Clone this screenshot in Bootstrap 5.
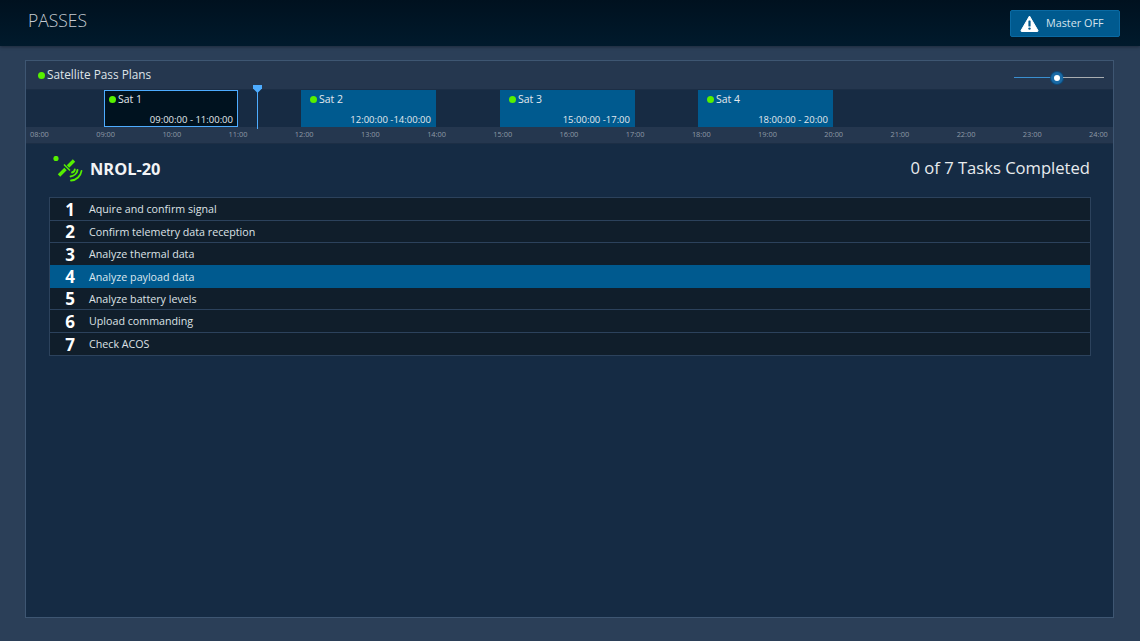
<!doctype html>
<html lang="en">
<head>
<meta charset="utf-8">
<title>Passes</title>
<link href="https://cdn.jsdelivr.net/npm/bootstrap@5.3.0/dist/css/bootstrap.min.css" rel="stylesheet">
<style>
html,body{height:641px;overflow:hidden}
body{background:#2b3f58;color:#fff;font-family:"Open Sans",sans-serif;font-size:11px}
.top{height:46px;background:linear-gradient(#00111f,#001a2c);padding:0 20px 0 28px;box-shadow:0 1px 3px rgba(0,0,0,.35)}
.top h1{font-weight:300;font-size:17.5px;margin:0 0 5px;color:#c6ccd2}
.master{width:110px;height:27px;background:#005a8f;border:1px solid #0a6aa3;border-radius:2px;color:#d5e3ed;font-size:10.8px;padding:0 0 0 9px;gap:7px}
.panel{position:relative;margin:14px 26px 0 25px;height:558px;background:#152b44;border:1px solid #3e5672;box-sizing:border-box}
.phead{height:29px;background:#25374f;padding:0 9px 0 12px;border-bottom:1px solid #1c2e45;font-size:11.8px;color:#dfe4e8}
.dot{display:inline-block;width:7px;height:7px;border-radius:50%;background:#56f000;margin-right:2px;vertical-align:0}
.slide{width:90px;height:10px;margin-top:5px}
.slide i{display:block;height:1.5px;flex:0 0 auto}
.slide .a{width:37px;background:#3a8fd0}
.slide .b{width:41px;background:#a9adb1}
.knob{width:12px;height:12px;border-radius:50%;background:#fff;border:3px solid #1a6aa5;box-shadow:0 0 0 1px #0d4a7a;flex:0 0 auto}
.track{height:37px;background:#172b43;padding-left:78px}
.pass{width:135px;height:37px;background:#005a8f;padding:2px 5px 3px 9px;color:#e3e9ee;font-size:10.5px;line-height:15px}
.pass .time{text-align:right;font-size:9.5px;margin-top:5px}
.pass.sel{width:134px;background:#00121f;border:1px solid #4dacff;padding:1px 4px 2px 4px}
.g1{margin-left:63px}.g2{margin-left:64px}.g3{margin-left:63px}
.marker{position:absolute;left:231px;top:24px;width:1px;height:44px;background:#4dacff}
.marker:before{content:"";position:absolute;left:-4px;top:0;width:9px;height:8px;background:#4dacff;clip-path:polygon(0 0,100% 0,100% 45%,50% 100%,0 45%)}
.ticks{height:17px;background:#25374f;padding:0 5px 0 4px;font-size:7.4px;color:#8e99a6;border-bottom:1px solid #1c2e45;box-sizing:border-box}
.mission{padding:0 23px 4px 27px;height:53px}
.mission h2{font-size:16.4px;font-weight:700;margin:0;color:#f2f4f6}
.mission .prog{font-size:16.6px;color:#e8ebee}
.mission .head{gap:7px}
.tasks{margin:0 22px 0 23px;border:1px solid #2c425c;border-radius:0;background:#101e2b}
.tasks .list-group-item{height:22.6px;padding:1px 0 0;background:#101e2b;color:#dde2e6;font-size:10.7px;border-color:#2c425c;border-width:0 0 1px;display:flex;align-items:center}
.tasks .list-group-item:last-child{border-bottom:0}
.tasks .num{width:40px;text-align:center;font-size:17px;font-weight:700;color:#fff;line-height:1;margin-right:-1px}
.tasks .list-group-item.active{background:#005a8f;color:#dbe6ee;border-color:#005a8f;box-shadow:0 1px 0 #005a8f}
</style>
</head>
<body>
<header class="top d-flex align-items-center justify-content-between">
  <h1>PASSES</h1>
  <button type="button" class="master btn d-flex align-items-center">
    <svg width="19" height="17" viewBox="0 0 19 17" aria-hidden="true"><path d="M9.500 1 18 15.600c.2.4 0 .9-.5.9h-16c-.5 0-.7-.5-.5-.9z" fill="#fff" stroke="#fff" stroke-linejoin="round"/><rect x="8.400" y="5.500" width="2.200" height="6" rx=".6" fill="#005a8f"/><circle cx="9.500" cy="13.600" r="1.200" fill="#005a8f"/></svg>
    <span>Master OFF</span>
  </button>
</header>
<main class="panel">
  <div class="phead d-flex align-items-center justify-content-between">
    <div><span class="dot"></span>Satellite Pass Plans</div>
    <div class="slide d-flex align-items-center"><i class="a"></i><span class="knob"></span><i class="b"></i></div>
  </div>
  <div class="track d-flex">
    <div class="pass sel"><div class="name"><span class="dot"></span>Sat 1</div><div class="time">09:00:00 - 11:00:00</div></div>
    <div class="pass g1"><div class="name"><span class="dot"></span>Sat 2</div><div class="time">12:00:00 -14:00:00</div></div>
    <div class="pass g2"><div class="name"><span class="dot"></span>Sat 3</div><div class="time">15:00:00 -17:00</div></div>
    <div class="pass g3"><div class="name"><span class="dot"></span>Sat 4</div><div class="time">18:00:00 - 20:00</div></div>
  </div>
  <div class="marker"></div>
  <div class="ticks d-flex align-items-center justify-content-between">
    <span>08:00</span><span>09:00</span><span>10:00</span><span>11:00</span><span>12:00</span><span>13:00</span><span>14:00</span><span>15:00</span><span>16:00</span><span>17:00</span><span>18:00</span><span>19:00</span><span>20:00</span><span>21:00</span><span>22:00</span><span>23:00</span><span>24:00</span>
  </div>
  <section class="mission d-flex align-items-center justify-content-between">
    <div class="head d-flex align-items-center">
      <svg width="30" height="26" viewBox="0 0 30 26" fill="none" aria-hidden="true">
        <circle cx="3" cy="2.500" r="2.600" fill="#56f000"/>
        <path d="M6 19.500 12.500 13M15 10.500 21 4.500" stroke="#56f000" stroke-width="3.400"/>
        <path d="M11 8.500l6 6" stroke="#56f000" stroke-width="1.500"/>
        <path d="M19 16.500c1.600-.3 2.500-1.300 2.800-3M17.500 20.500c3.500-.3 6.500-3 7-6.500M18 24.500c5.500-.4 9.800-4.500 10.500-9.500" stroke="#56f000" stroke-width="1.800" stroke-linecap="round"/>
      </svg>
      <h2>NROL-20</h2>
    </div>
    <div class="prog">0 of 7 Tasks Completed</div>
  </section>
  <ul class="list-group tasks">
    <li class="list-group-item"><span class="num">1</span>Aquire and confirm signal</li>
    <li class="list-group-item"><span class="num">2</span>Confirm telemetry data reception</li>
    <li class="list-group-item"><span class="num">3</span>Analyze thermal data</li>
    <li class="list-group-item active"><span class="num">4</span>Analyze payload data</li>
    <li class="list-group-item"><span class="num">5</span>Analyze battery levels</li>
    <li class="list-group-item"><span class="num">6</span>Upload commanding</li>
    <li class="list-group-item"><span class="num">7</span>Check ACOS</li>
  </ul>
</main>
<script src="https://cdn.jsdelivr.net/npm/bootstrap@5.3.0/dist/js/bootstrap.bundle.min.js"></script>
</body>
</html>
